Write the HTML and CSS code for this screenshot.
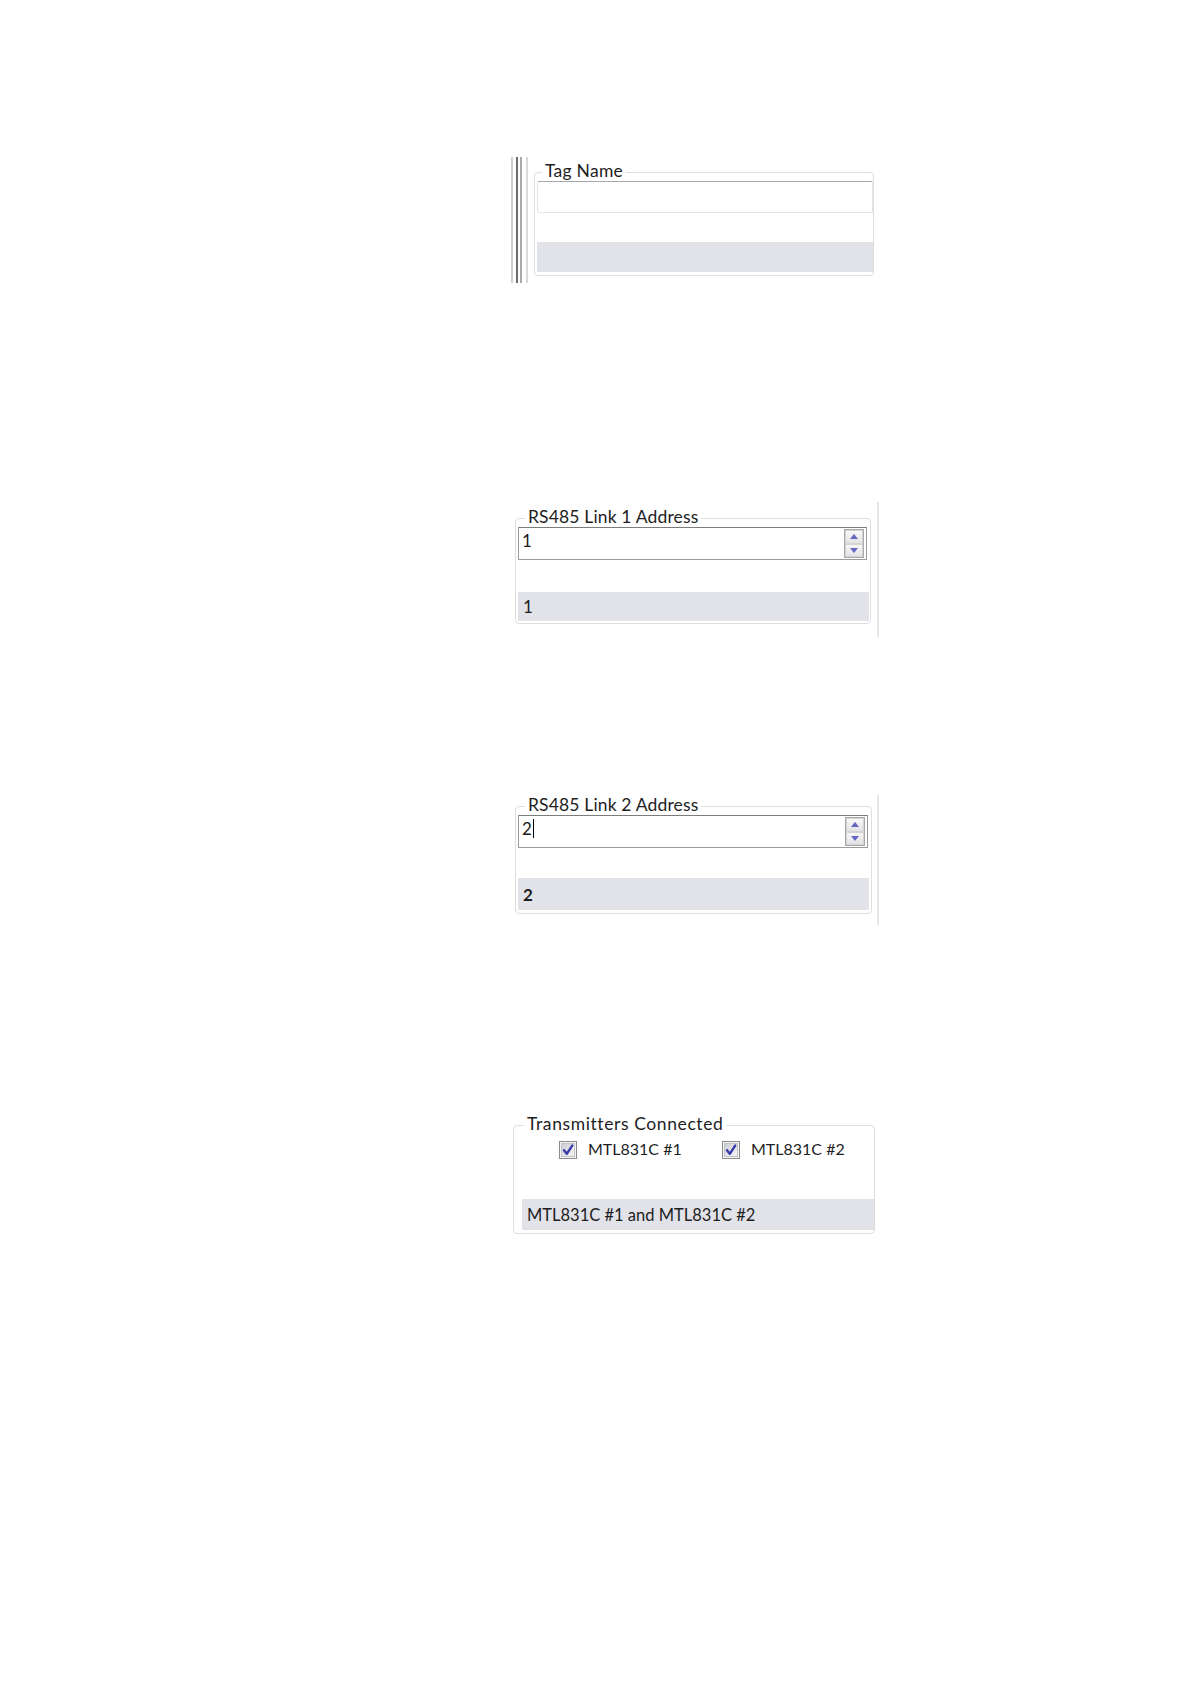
FILE: index.html
```html
<!DOCTYPE html>
<html lang="en">
<head>
<meta charset="utf-8">
<title>Property panels</title>
<link rel="stylesheet" href="styles.css">
</head>
<body>
<main class="page">

  <section class="shot shot-tag">
    <div class="splitter"></div>
    <div class="group group-tag">
      <div class="legend">Tag Name</div>
      <div class="textbox textbox-light"></div>
      <div class="band"></div>
    </div>
  </section>

  <section class="shot shot-link1">
    <div class="group group-link1">
      <div class="legend">RS485 Link 1 Address</div>
      <div class="textbox">
        <span class="value">1</span>
        <div class="spinner">
          <div class="spin-btn"><svg viewBox="0 0 8 5" class="arrow"><path d="M0 5 L4 0 L8 5 Z"/></svg></div>
          <div class="spin-btn"><svg viewBox="0 0 8 5" class="arrow"><path d="M0 0 L8 0 L4 5 Z"/></svg></div>
        </div>
      </div>
      <div class="band"><span class="band-text">1</span></div>
    </div>
    <div class="vline"></div>
  </section>

  <section class="shot shot-link2">
    <div class="group group-link2">
      <div class="legend">RS485 Link 2 Address</div>
      <div class="textbox">
        <span class="value">2<span class="caret"></span></span>
        <div class="spinner">
          <div class="spin-btn"><svg viewBox="0 0 8 5" class="arrow"><path d="M0 5 L4 0 L8 5 Z"/></svg></div>
          <div class="spin-btn"><svg viewBox="0 0 8 5" class="arrow"><path d="M0 0 L8 0 L4 5 Z"/></svg></div>
        </div>
      </div>
      <div class="band"><span class="band-text band-bold">2</span></div>
    </div>
    <div class="vline vline-2"></div>
  </section>

  <section class="shot shot-tx">
    <div class="group group-tx">
      <div class="legend legend-tx">Transmitters Connected</div>
      <div class="checks">
        <label class="check check-1">
          <svg class="cbox" viewBox="0 0 18 18">
            <defs>
              <linearGradient id="cbg" x1="0" y1="0" x2="1" y2="1">
                <stop offset="0" stop-color="#cbcbd3"/>
                <stop offset="1" stop-color="#f7f7f9"/>
              </linearGradient>
            </defs>
            <rect x="0.5" y="0.5" width="17" height="17" fill="#f4f4f4" stroke="#8c8c8c"/>
            <rect x="2.5" y="2.5" width="13" height="13" fill="url(#cbg)" stroke="#c4c4c8"/>
            <path d="M5 9.2 L7.8 12.8 L13.2 4.6" fill="none" stroke="#3a3aac" stroke-width="2.4" stroke-linecap="round" stroke-linejoin="round"/>
          </svg>
          <span class="check-label">MTL831C #1</span>
        </label>
        <label class="check">
          <svg class="cbox" viewBox="0 0 18 18">
            <rect x="0.5" y="0.5" width="17" height="17" fill="#f4f4f4" stroke="#8c8c8c"/>
            <rect x="2.5" y="2.5" width="13" height="13" fill="url(#cbg)" stroke="#c4c4c8"/>
            <path d="M5 9.2 L7.8 12.8 L13.2 4.6" fill="none" stroke="#3a3aac" stroke-width="2.4" stroke-linecap="round" stroke-linejoin="round"/>
          </svg>
          <span class="check-label">MTL831C #2</span>
        </label>
      </div>
      <div class="band band-tx"><span class="band-text band-text-tx">MTL831C #1 and MTL831C #2</span></div>
    </div>
  </section>

</main>
</body>
</html>
```

FILE: styles.css
```css
* {
  box-sizing: border-box;
}

html,
body {
  margin: 0;
  background: #ffffff;
}

body {
  font-family: Lato, "Open Sans", sans-serif;
  color: #1c1c1c;
}

.page {
  padding-top: 157px;
  min-height: 1684px;
}

.shot {
  display: flex;
  align-items: flex-start;
}

.shot-tag {
  margin-left: 511px;
}

.shot-link1 {
  margin-top: 219px;
  margin-left: 515px;
}

.shot-link2 {
  margin-top: 158px;
  margin-left: 515px;
}

.shot-tx {
  margin-top: 200px;
  margin-left: 513px;
}

/* left splitter lines beside Tag Name */
.splitter {
  width: 17px;
  height: 126px;
  background: linear-gradient(to right,
      #cfcfcf 0 2px,
      #ffffff 2px 5px,
      #6e6e6e 5px 7px,
      #ffffff 7px 9px,
      #a9a9a9 9px 11px,
      #ffffff 11px 15px,
      #dadada 15px 17px);
}

.vline {
  width: 2px;
  height: 135px;
  margin-left: 6px;
  background: #e6e6e6;
}

.vline-2 {
  height: 130px;
  margin-left: 5px;
}

/* group boxes */
.group {
  border: 1px solid #dedede;
  border-radius: 4px;
  background: #ffffff;
}

.legend {
  width: max-content;
  height: 18px;
  margin-top: -10px;
  padding: 0 3px;
  background: #ffffff;
  font-size: 17.5px;
  line-height: 15px;
  color: #1e1e1e;
}

.legend-tx {
  letter-spacing: 0.6px;
}

.group-tag {
  margin-left: 6px;
  margin-top: 15px;
  width: 340px;
  height: 104px;
  padding-left: 2px;
}

.group-tag .legend {
  margin-left: 5px;
  letter-spacing: 0.25px;
}

.group-tag .textbox {
  width: 336px;
  height: 32px;
}

.group-tag .band {
  margin-top: 29px;
  width: 336px;
  height: 30px;
}

.group-link1 {
  margin-top: 16px;
  width: 356px;
  height: 106px;
  padding-left: 2px;
}

.group-link1 .legend,
.group-link2 .legend {
  margin-left: 7px;
  line-height: 16px;
  letter-spacing: 0.15px;
}

.group-link1 .textbox {
  width: 349px;
  height: 33px;
}

.group-link1 .band {
  margin-top: 32px;
  width: 351px;
  height: 29px;
}

.group-link2 {
  margin-top: 11px;
  width: 357px;
  height: 108px;
  padding-left: 2px;
}

.group-link2 .textbox {
  width: 350px;
  height: 33px;
}

.group-link2 .band {
  margin-top: 30px;
  width: 351px;
  height: 32px;
}

.group-tx {
  width: 362px;
  height: 109px;
}

.group-tx .legend {
  margin-left: 10px;
  line-height: 16px;
}

/* text boxes */
.textbox {
  display: flex;
  align-items: center;
  justify-content: space-between;
  border: 1px solid #9c9c9c;
  border-top-color: #7c7c7c;
  background: #ffffff;
  padding-right: 2px;
}

.textbox-light {
  border-color: #e4e4e4;
  border-top-color: #a8a8a8;
  border-radius: 2px;
}

.value {
  padding-left: 3px;
  margin-bottom: 6px;
  font-size: 17px;
  line-height: 20px;
  display: flex;
  align-items: center;
}

.caret {
  display: inline-block;
  width: 1px;
  height: 19px;
  margin-left: 1px;
  background: #000000;
}

.spinner {
  width: 20px;
  height: 29px;
  display: flex;
  flex-direction: column;
  border: 1px solid #a8a8a8;
  background: #ffffff;
}

.spin-btn {
  flex: 1;
  display: flex;
  align-items: center;
  justify-content: center;
  border: 1px solid #d4d4d4;
  background: linear-gradient(#f7f7f7, #e3e3e6);
}

.arrow {
  width: 8px;
  height: 5px;
  fill: #6666c4;
}

/* value bands */
.band {
  display: flex;
  align-items: center;
  background: #e2e2e9;
}

.band-text {
  padding-left: 5px;
  font-size: 17px;
  color: #1e1e1e;
}

.band-text-tx {
  font-size: 16.5px;
}

.band-bold {
  font-weight: 700;
}

.band-tx {
  margin-top: 40px;
  margin-left: 8px;
  width: 352px;
  height: 31px;
}

/* checkboxes */
.checks {
  display: flex;
  margin-top: 7px;
  height: 18px;
  padding-left: 45px;
}

.check {
  display: flex;
  align-items: center;
  height: 18px;
}

.check-1 {
  width: 163px;
}

.cbox {
  width: 18px;
  height: 18px;
  flex: none;
}

.check-label {
  margin-left: 11px;
  margin-bottom: 3px;
  font-size: 16px;
  line-height: 18px;
  color: #1e1e1e;
}
```
